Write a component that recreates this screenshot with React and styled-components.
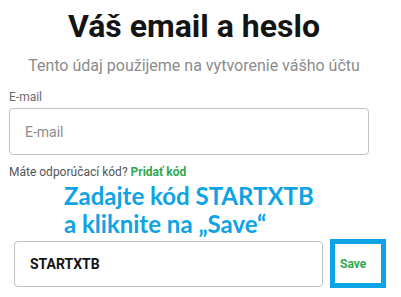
import React from "react";
import styled, { createGlobalStyle } from "styled-components";

const GlobalStyle = createGlobalStyle`
  html, body {
    margin: 0;
    padding: 0;
    background: #ffffff;
  }
  body {
    font-family: Roboto, "Liberation Sans", Arial, sans-serif;
    width: 401px;
    height: 297px;
    overflow: hidden;
  }
  * {
    box-sizing: border-box;
  }
`;

const App = () => {
  return (
    <>
      <GlobalStyle />
      <Page>
        <Header>
          <Title>Váš email a heslo</Title>
          <Subtitle>Tento údaj použijeme na vytvorenie vášho účtu</Subtitle>
        </Header>
        <Field>
          <Label>E-mail</Label>
          <Input placeholder="E-mail" />
        </Field>
        <Hint>
          Máte odporúčací kód? <HintLink>Pridať kód</HintLink>
        </Hint>
        <Annotation>
          Zadajte kód STARTXTB
          <br />
          a kliknite na „Save“
        </Annotation>
        <CodeRow>
          <CodeInput defaultValue="STARTXTB" />
          <SaveFrame>
            <SaveButton>Save</SaveButton>
          </SaveFrame>
        </CodeRow>
      </Page>
    </>
  );
};

const Page = styled.div`
  display: flex;
  flex-direction: column;
  padding-top: 7px;
`;

const Header = styled.div`
  width: 370px;
  margin-left: 9px;
  text-align: center;
`;

const Title = styled.h1`
  margin: 0;
  font-size: 32px;
  line-height: 38px;
  font-weight: 700;
  color: #141414;
`;

const Subtitle = styled.p`
  margin: 11px 0 0;
  font-size: 16px;
  line-height: 20px;
  color: #8c8c8c;
`;

const Field = styled.div`
  display: flex;
  flex-direction: column;
  gap: 3px;
  margin: 13px 0 0 9px;
`;

const Label = styled.label`
  font-size: 12px;
  line-height: 16px;
  color: #6a6a6a;
`;

const Input = styled.input`
  width: 360px;
  height: 47px;
  border: 1px solid #c2c2c2;
  border-radius: 4px;
  padding: 0 15px;
  font-family: Roboto, "Liberation Sans", Arial, sans-serif;
  font-size: 14px;
  color: #222;
  outline: none;
  &::placeholder {
    color: #8c8c8c;
  }
`;

const Hint = styled.p`
  margin: 9px 0 0 9px;
  font-size: 12px;
  line-height: 16px;
  color: #555;
`;

const HintLink = styled.span`
  color: #2ea84f;
  font-weight: 700;
`;

const Annotation = styled.div`
  margin: 2px 0 0 64px;
  font-family: Lato, "Open Sans", sans-serif;
  font-size: 24px;
  line-height: 28px;
  font-weight: 700;
  color: #0ea3e4;
`;

const CodeRow = styled.div`
  display: flex;
  align-items: center;
  gap: 7px;
  margin: 1px 0 0 14px;
`;

const CodeInput = styled.input`
  width: 309px;
  height: 46px;
  border: 1px solid #c2c2c2;
  border-radius: 4px;
  padding: 0 15px;
  font-family: Roboto, "Liberation Sans", Arial, sans-serif;
  font-size: 14px;
  font-weight: 700;
  color: #141414;
  outline: none;
`;

const SaveFrame = styled.div`
  width: 56px;
  height: 49px;
  border: 5px solid #0ea3e4;
  display: flex;
  align-items: center;
  padding-left: 5px;
`;

const SaveButton = styled.button`
  border: none;
  background: none;
  padding: 0;
  font-family: Roboto, "Liberation Sans", Arial, sans-serif;
  font-size: 12px;
  font-weight: 700;
  color: #2ea84f;
  cursor: pointer;
`;

export default App;
